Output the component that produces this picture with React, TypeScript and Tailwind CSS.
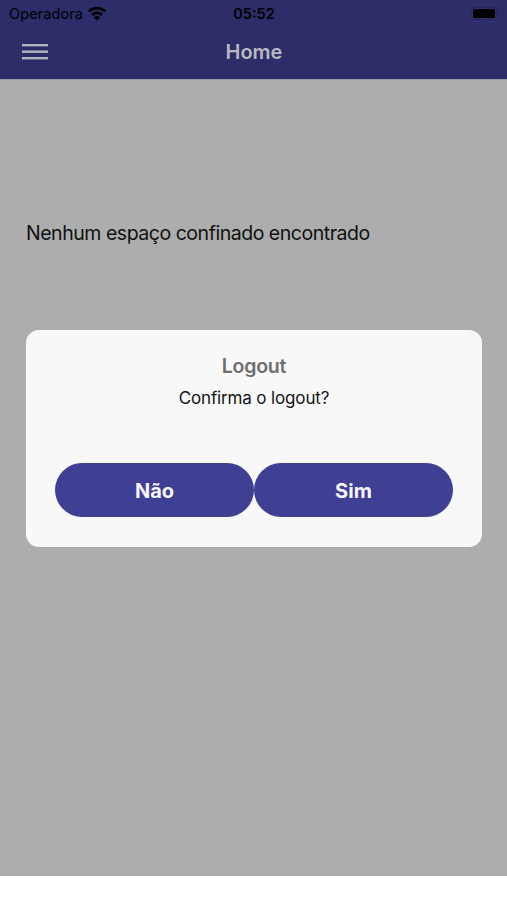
function StatusBar() {
  return (
    <div className="grid h-[27px] grid-cols-3 items-center pl-[9px] pr-[8px] text-black">
      <div className="flex items-center gap-[5px]">
        <span className="text-[14.5px] leading-[18px] tracking-[0.1px]">Operadora</span>
        <svg width="18" height="15" viewBox="0 0 18 15" className="mb-px shrink-0">
          <g fill="none" stroke="currentColor" strokeWidth="2.7">
            <path d="M0.9 5.4a11.5 11.5 0 0 1 16.2 0" />
            <path d="M4 9a7.1 7.1 0 0 1 10 0" />
          </g>
          <path d="M9 14.5 6 11.5a4.3 4.3 0 0 1 6 0Z" fill="currentColor" />
        </svg>
      </div>
      <span className="text-center text-[14.5px] font-semibold leading-[18px]">05:52</span>
      <svg width="29" height="14" viewBox="0 0 29 14" className="justify-self-end">
        <rect x="0.5" y="0.5" width="26.5" height="12" rx="3.5" fill="none" stroke="#262759" />
        <rect x="3" y="2" width="22" height="9" rx="1.8" fill="currentColor" />
        <path d="M27.6 4.5c1.4.7 1.4 3.5 0 4.2Z" fill="#222354" />
      </svg>
    </div>
  );
}

function MenuIcon() {
  return (
    <svg width="26" height="16" viewBox="0 0 26 16" fill="#b4b4bb">
      <rect y="0" width="26" height="2.4" />
      <rect y="6.5" width="26" height="2.4" />
      <rect y="13" width="26" height="2.4" />
    </svg>
  );
}

function Header() {
  return (
    <header className="h-[79px] bg-[#2c2d69]">
      <StatusBar />
      <div className="grid h-[50px] grid-cols-3 items-center px-[22px]">
        <button aria-label="Menu" className="w-[26px]">
          <MenuIcon />
        </button>
        <h1 className="pl-px text-center text-[20px] font-semibold leading-6 text-[#b9b9c1]">Home</h1>
      </div>
    </header>
  );
}

function LogoutDialog() {
  return (
    <div
      role="dialog"
      className="absolute left-[26px] top-[330px] flex h-[217px] w-[456px] flex-col items-center rounded-[13px] bg-[#f8f8f8] px-[29px] pt-6"
    >
      <h2 className="text-[19.5px] font-semibold leading-6 tracking-[-0.2px] text-[#6e6e6e]">Logout</h2>
      <p className="mt-[8px] text-[17px] leading-6 tracking-[-0.14px] text-[#141414]">Confirma o logout?</p>
      <div className="mt-[53px] flex w-full text-[20px] font-bold text-[#f5f5fa]">
        <button className="h-[54px] flex-1 rounded-full bg-[#3f3f94] pt-px">Não</button>
        <button className="h-[54px] flex-1 rounded-full bg-[#3f3f94] pt-px">Sim</button>
      </div>
    </div>
  );
}

export default function App() {
  return (
    <div className="h-[900px] w-[507px] overflow-hidden bg-white font-['Inter',sans-serif]">
      <div className="relative h-[876px] bg-[#adadad]">
        <Header />
        <main className="border-t border-[#9a9aa8] px-[26px] pt-[141px]">
          <p className="whitespace-nowrap text-[19.5px] leading-6 tracking-[-0.47px] text-[#111111]">
            Nenhum espaço confinado encontrado
          </p>
        </main>
        <LogoutDialog />
      </div>
    </div>
  );
}
